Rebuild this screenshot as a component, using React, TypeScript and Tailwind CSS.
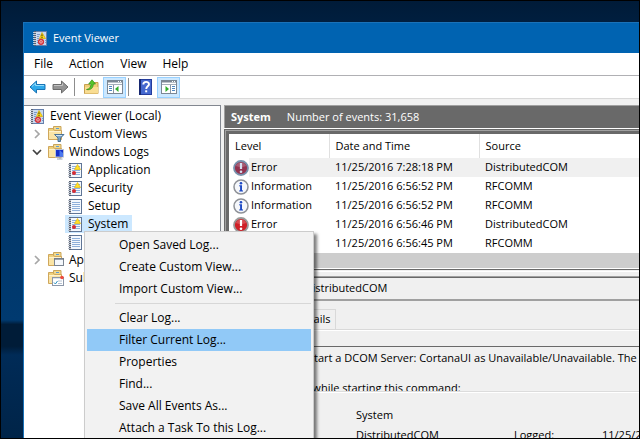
import clsx from 'clsx';
import type { ReactNode } from 'react';

type EventLevel = 'error' | 'information';

type EventRow = {
  level: EventLevel;
  date: string;
  source: string;
  selected?: boolean;
};

const menus = ['File', 'Action', 'View', 'Help'];

const events: EventRow[] = [
  { level: 'error', date: '11/25/2016 7:28:18 PM', source: 'DistributedCOM', selected: true },
  { level: 'information', date: '11/25/2016 6:56:52 PM', source: 'RFCOMM' },
  { level: 'information', date: '11/25/2016 6:56:52 PM', source: 'RFCOMM' },
  { level: 'error', date: '11/25/2016 6:56:46 PM', source: 'DistributedCOM' },
  { level: 'information', date: '11/25/2016 6:56:45 PM', source: 'RFCOMM' },
];

const contextMenu = [
  ['Open Saved Log...', 'Create Custom View...', 'Import Custom View...'],
  [
    'Clear Log...',
    'Filter Current Log...',
    'Properties',
    'Find...',
    'Save All Events As...',
    'Attach a Task To this Log...',
  ],
];

function ViewerIcon() {
  return (
    <svg viewBox="0 0 14 15" className="h-[15px] w-[14px] shrink-0">
      <rect x="2.5" y="0.5" width="11" height="14" fill="#c9d9f0" stroke="#6680ac" />
      <path d="M4 3.5h3M4 5.5h2M4 7.5h2M4 9.5h1M4 11.5h1M12 9.5h1M12 11.5h1" stroke="#7d9bc9" />
      <path d="M2 0v15" stroke="#596273" strokeWidth="2" />
      <path d="M0 1.5h3M0 3.5h3M0 5.5h3M0 7.5h3M0 9.5h3M0 11.5h3M0 13.5h3" stroke="#c6ccd6" />
      <path d="M9 1.5L12.5 7.5h-6z" fill="#ffe11c" stroke="#d3a600" strokeWidth="0.7" />
      <path d="M9 3.4v2M9 6v1" stroke="#3d3200" />
      <circle cx="8" cy="10.8" r="2.4" fill="#fbe3e3" stroke="#d3323a" strokeWidth="1.5" />
      <path d="M7 9.8l2 2M9 9.8l-2 2" stroke="#d3323a" strokeWidth="0.8" />
    </svg>
  );
}

function LogIcon({ plain }: { plain?: boolean }) {
  return (
    <svg viewBox="0 0 14 15" className="h-[15px] w-[14px] shrink-0">
      <rect x="2.5" y="0.5" width="11" height="14" fill="#f4f8fd" stroke="#5f7596" />
      <path d="M4 3.5h8M4 5.5h8M4 7.5h8M4 9.5h8M4 11.5h8" stroke="#8fb0da" />
      <path d="M2 0v15" stroke="#596273" strokeWidth="2" />
      <path d="M0 1.5h3M0 3.5h3M0 5.5h3M0 7.5h3M0 9.5h3M0 11.5h3M0 13.5h3" stroke="#b9c0cb" />
      {!plain && (
        <>
          <path d="M9.5 1.5L12.5 6.5h-6z" fill="#ffe02a" stroke="#e2b80a" strokeWidth="0.7" />
          <circle cx="6" cy="10" r="2" fill="#d62c34" />
        </>
      )}
    </svg>
  );
}

function FolderIcon({ children }: { children?: ReactNode }) {
  return (
    <svg viewBox="0 0 17 16" className="h-4 w-[17px] shrink-0">
      <path d="M5.5 0.5h7.500v5h-7.500z" fill="#f3d98b" stroke="#c9a45a" />
      <path d="M8 2.500h3" stroke="#5b9bd5" />
      <path d="M0.5 2.500h4.500l1.500 2h7v9h-13z" fill="#eed07d" stroke="#cfa75c" />
      <path d="M1 6h12v7H1z" fill="#fae4a6" />
      <path d="M1 5.500h12" stroke="#fff3cf" />
      {children}
    </svg>
  );
}

function CustomViewsIcon() {
  return (
    <FolderIcon>
      <path d="M6.5 8.500h9.500l-3.500 3.500v3.500h-2.500v-3.500z" fill="#7ba3c5" stroke="#4d7496" />
      <path d="M8 9.500h6" stroke="#cfe2f2" />
    </FolderIcon>
  );
}

function WindowsLogsIcon() {
  return (
    <FolderIcon>
      <rect x="7.5" y="5.500" width="8" height="7.500" fill="#1730c8" stroke="#b9c3d6" />
      <path d="M11.500 6v6.500h3.500V9z" fill="#4a78f0" />
      <path d="M9 15h5.500M11 14h2" stroke="#9aa3b2" />
    </FolderIcon>
  );
}

function ApplicationsIcon() {
  return (
    <FolderIcon>
      <rect x="6.5" y="6.5" width="9" height="7" fill="#f5f8fc" stroke="#7c8592" />
      <path d="M6 7h10" stroke="#717b89" strokeWidth="1.4" />
    </FolderIcon>
  );
}

function SubscriptionsIcon() {
  return (
    <FolderIcon>
      <rect x="4.5" y="7.5" width="11" height="8" fill="#fff" stroke="#8c97a8" />
      <path d="M5 8.5h8" stroke="#dde3ec" />
      <circle cx="14" cy="7.5" r="1.8" fill="#f04a3c" />
      <path d="M6 12.5l1.4 1.5L9.5 11" fill="none" stroke="#2a8fbd" />
      <path d="M10.5 11h1M12.5 11h1M10.5 13.5h1M12.5 13.5h1" stroke="#6b84a4" />
    </FolderIcon>
  );
}

function Chevron({ open }: { open?: boolean }) {
  return (
    <svg viewBox="0 0 10 10" className="h-2.5 w-2.5 shrink-0" fill="none" strokeWidth="1.7">
      {open ? (
        <path d="M1 3l4 4 4-4" stroke="#404040" />
      ) : (
        <path d="M3 1l4 4-4 4" stroke="#a6a6a6" />
      )}
    </svg>
  );
}

function LevelIcon({ level, selected }: { level: EventLevel; selected?: boolean }) {
  if (level === 'error') {
    return (
      <svg viewBox="0 0 16 16" className="h-4 w-4 shrink-0">
        <circle
          cx="8"
          cy="8"
          r="7"
          fill={selected ? '#93324f' : '#cf2027'}
          stroke={selected ? '#7891ac' : '#9a9a9a'}
          strokeWidth="1.8"
        />
        <path d="M2.8 6a5.6 5.6 0 0 1 10.4 0c-3 1.5-7 1.5-10.4 0z" fill="#fff" opacity="0.2" />
        <path d="M8 3v6" stroke={selected ? '#d5dff0' : '#fff'} strokeWidth="2.2" />
        <circle cx="8" cy="11.7" r="1.3" fill={selected ? '#d5dff0' : '#fff'} />
      </svg>
    );
  }
  return (
    <svg viewBox="0 0 16 16" className="h-4 w-4 shrink-0">
      <circle cx="8" cy="8" r="7" fill="#f5f7fb" stroke="#8e9197" strokeWidth="1.5" />
      <circle cx="8" cy="4.2" r="1.3" fill="#1d49c4" />
      <path d="M6.2 6.3H9v5l1 .3v.9H6.2v-.9l.9-.3V7.500l-.9-.3z" fill="#1d49c4" />
    </svg>
  );
}

function ArrowIcon({ forward }: { forward?: boolean }) {
  return (
    <svg viewBox="0 0 17 14" className="h-3.5 w-[17px]">
      {forward ? (
        <>
          <path d="M16 7L9.5 1v3.500H1v5h8.500V13z" fill="#949494" stroke="#6c6c6c" />
          <path d="M2 5.500h8.500V3.300" fill="none" stroke="#c4c4c4" />
        </>
      ) : (
        <>
          <path d="M1 7l6.500-6v3.500H16v5H7.500V13z" fill="#2fa9ea" stroke="#1973b4" />
          <path d="M3 6.500L6.500 3.300v2.200H15" fill="none" stroke="#93dcfb" />
        </>
      )}
    </svg>
  );
}

function UpFolderIcon() {
  return (
    <svg viewBox="0 0 15 16" className="h-4 w-[15px]">
      <path d="M0.5 5.500h5l1 1.500h1.500V3.500h6v11H.5z" fill="#f0cf78" stroke="#c79f4e" />
      <path d="M1 8h13v6.500H1z" fill="#f9dd92" />
      <path
        d="M2.500 10.500C5.500 10 7 8 7 5H4.700L8 0.800 11.500 5H9.300c0 3.800-2.500 6.500-6.800 5.500z"
        fill="#58c52b"
        stroke="#2f8f17"
        strokeWidth="0.7"
      />
    </svg>
  );
}

function HelpIcon() {
  return (
    <svg viewBox="0 0 13 16" className="h-4 w-[13px]">
      <rect width="13" height="16" fill="#243c9c" />
      <rect x="2" y="1" width="10" height="14" fill="#4468cf" />
      <path d="M1 0v16" stroke="#142467" strokeWidth="1.6" />
      <path
        d="M4.300 5.500C4.300 2 10 2 10 5.200c0 2-2.800 2.300-2.800 4.800"
        fill="none"
        stroke="#fff"
        strokeWidth="1.9"
      />
      <rect x="6.200" y="11.300" width="2" height="2" fill="#fff" />
    </svg>
  );
}

// Small window outline used by the two pane toggles
function PaneIcon({ side }: { side: 'left' | 'right' }) {
  return (
    <svg viewBox="0 0 16 14" className="h-3.5 w-4">
      <rect x="0.5" y="0.5" width="15" height="13" fill="#fff" stroke="#7b8794" />
      <path d="M0 1.500h16" stroke="#7b8794" strokeWidth="2" />
      <path d="M11 1.500h1M13 1.500h1" stroke="#fff" />
      <path d="M1 4.500h14" stroke="#a5afba" />
      {side === 'left' ? (
        <>
          <path d="M6.500 5v8" stroke="#8a95a2" />
          <path d="M2 6.500h3M2 8.500h3M2 10.500h3" stroke="#4d86c0" />
          <path d="M11.500 6v6L8 9z" fill="#2fae2a" />
        </>
      ) : (
        <>
          <path d="M9.500 5v8" stroke="#8a95a2" />
          <path d="M11 6.500h3M11 8.500h3M11 10.500h3" stroke="#4d86c0" />
          <path d="M4.500 6v6L8 9z" fill="#2fae2a" />
        </>
      )}
    </svg>
  );
}

function ToolButton({
  label,
  active,
  className,
  children,
}: {
  label: string;
  active?: boolean;
  className?: string;
  children: ReactNode;
}) {
  return (
    <button
      type="button"
      aria-label={label}
      className={clsx(
        'flex h-[21px] w-[23px] items-center justify-center',
        active && 'border border-[#99d1ff] bg-[#cce8ff]',
        className,
      )}
    >
      {children}
    </button>
  );
}

function TreeFolder({
  label,
  icon,
  open,
  leaf,
}: {
  label: string;
  icon: ReactNode;
  open?: boolean;
  leaf?: boolean;
}) {
  return (
    <button type="button" className="flex h-[18px] items-center pl-2">
      <span className="flex w-4 shrink-0">{!leaf && <Chevron open={open} />}</span>
      {icon}
      <span className="pl-1">{label}</span>
    </button>
  );
}

function TreeLog({ label, plain, selected }: { label: string; plain?: boolean; selected?: boolean }) {
  return (
    <button
      type="button"
      className={clsx(
        'ml-[41px] flex h-[18px] items-center gap-1.5 pr-1 pl-[3px]',
        selected && 'bg-[#cce8ff]',
      )}
    >
      <LogIcon plain={plain} />
      {label}
    </button>
  );
}

function ConsoleTree() {
  return (
    <nav className="flex w-[197px] shrink-0 flex-col items-start overflow-hidden border-t border-r border-[#828790] bg-white pt-px">
      <button type="button" className="flex h-[18px] items-center gap-1.5 pl-1.5">
        <ViewerIcon />
        Event Viewer (Local)
      </button>
      <TreeFolder label="Custom Views" icon={<CustomViewsIcon />} />
      <TreeFolder label="Windows Logs" icon={<WindowsLogsIcon />} open />
      <TreeLog label="Application" />
      <TreeLog label="Security" />
      <TreeLog label="Setup" plain />
      <TreeLog label="System" selected />
      <TreeLog label="Forwarded Events" plain />
      <TreeFolder label="Applications and Services" icon={<ApplicationsIcon />} />
      <TreeFolder label="Subscriptions" icon={<SubscriptionsIcon />} leaf />
    </nav>
  );
}

function EventTable() {
  return (
    <table className="w-full table-fixed border-collapse bg-white text-left">
      <thead>
        <tr className="h-6">
          <th className="w-[100px] border-r border-[#e0e0e0] p-0 pl-1.5 font-normal">Level</th>
          <th className="w-[150px] border-r border-[#e0e0e0] p-0 pl-1.5 font-normal">Date and Time</th>
          <th className="p-0 pl-1.5 font-normal">Source</th>
        </tr>
      </thead>
      <tbody>
        {events.map((event, index) => (
          <tr key={index} className="h-[19px]">
            <td className="p-0 pl-1">
              <div className="flex h-[19px] items-center">
                <LevelIcon level={event.level} selected={event.selected} />
                <span
                  className={clsx(
                    'flex h-full flex-1 items-center pl-0.5',
                    event.selected && 'bg-[#f0f0f0]',
                  )}
                >
                  {event.level === 'error' ? 'Error' : 'Information'}
                </span>
              </div>
            </td>
            <td className={clsx('p-0 pl-1.5', event.selected && 'bg-[#f0f0f0]')}>{event.date}</td>
            <td className={clsx('p-0 pl-1.5', event.selected && 'bg-[#f0f0f0]')}>{event.source}</td>
          </tr>
        ))}
      </tbody>
    </table>
  );
}

function EventDetails() {
  return (
    <section className="flex flex-1 flex-col border-t border-[#a0a0a0]">
      <h2 className="flex h-6 shrink-0 items-center border-t border-b-2 border-t-[#696969] border-b-[#a0a0a0] pl-3">
        Event 10001, DistributedCOM
      </h2>
      <div className="mt-2 flex h-5 shrink-0 pl-2">
        <button type="button" className="w-[54px] border-t border-l border-[#d9d9d9]">
          General
        </button>
        <button type="button" className="w-[50px] border border-b-0 border-[#d9d9d9] pl-1">
          Details
        </button>
      </div>
      <div className="h-[17px] shrink-0 border-t border-[#d9d9d9]">
        <div className="border-t border-white" />
      </div>
      <div className="h-[46px] shrink-0 overflow-hidden border-t border-b border-t-[#696969] border-b-[#dcdcdc] pt-[3px] pl-8 leading-[15px] whitespace-nowrap">
        <p>Unable to start a DCOM Server: CortanaUI as Unavailable/Unavailable. The error:</p>
        <p className="pt-[15px]">Happened while starting this command:</p>
      </div>
      <dl className="grid grid-cols-[132px_158px_88px_auto] border-t border-white pt-3 leading-5 whitespace-nowrap">
        <dt className="pl-4">Log Name:</dt>
        <dd className="col-span-3">System</dd>
        <dt className="pl-4">Source:</dt>
        <dd>DistributedCOM</dd>
        <dt>Logged:</dt>
        <dd>11/25/2016 7:28:18 PM</dd>
      </dl>
    </section>
  );
}

function ContextMenu() {
  return (
    <div
      role="menu"
      className="absolute top-[230px] left-[83px] w-[230px] border border-[#cccccc] bg-[#f2f2f2] p-0.5 shadow-[3px_3px_3px_rgba(0,0,0,0.5)]"
    >
      {contextMenu.map((group, index) => (
        <div key={index}>
          {index > 0 && <hr className="my-[3px] ml-7 border-[#d7d7d7]" />}
          {group.map((item) => (
            <button
              key={item}
              type="button"
              role="menuitem"
              className={clsx(
                'flex h-[22px] w-full items-center pl-8',
                item === 'Filter Current Log...' && 'bg-[#91c9f7]',
              )}
            >
              {item}
            </button>
          ))}
        </div>
      ))}
    </div>
  );
}

export default function App() {
  return (
    <div className="relative flex h-screen overflow-hidden border border-black bg-[linear-gradient(180deg,#001b38_0%,#002a54_20%,#003567_45%,#003a70_73%,#001c38_74%,#001c38_79%,#002b57_81%,#002448_100%)] pt-[21px] pl-[22px] font-['Open_Sans','Noto_Sans',sans-serif] text-xs text-black">
      <div className="flex min-w-0 flex-1 flex-col border-t border-l border-[#1a72b8] bg-[#f0f0f0]">
        <header className="flex h-[30px] shrink-0 items-center gap-1.5 bg-[#0063b1] pl-[9px] text-[11px] text-white">
          <ViewerIcon />
          <h1>Event Viewer</h1>
        </header>
        <div className="flex h-[23px] shrink-0 border-b border-[#b0b0b4] bg-white pl-0.5">
          {menus.map((menu) => (
            <button key={menu} type="button" className="px-2">
              {menu}
            </button>
          ))}
        </div>
        <div className="flex h-[23px] shrink-0 items-center border-b border-[#d9d9d9] bg-white pl-0.5">
          <ToolButton label="Back">
            <ArrowIcon />
          </ToolButton>
          <ToolButton label="Forward">
            <ArrowIcon forward />
          </ToolButton>
          <span className="mx-0.5 h-[18px] w-px bg-[#8d8d8d]" />
          <ToolButton label="Up one level" className="ml-[3px]">
            <UpFolderIcon />
          </ToolButton>
          <ToolButton label="Show or hide console tree" active>
            <PaneIcon side="left" />
          </ToolButton>
          <span className="mx-0.5 h-[18px] w-px bg-[#8d8d8d]" />
          <ToolButton label="Help" className="ml-[3px]">
            <HelpIcon />
          </ToolButton>
          <ToolButton label="Show or hide action pane" active>
            <PaneIcon side="right" />
          </ToolButton>
        </div>

        <div className="flex min-h-0 flex-1 gap-[3px] pt-1.5">
          <ConsoleTree />
          <main className="flex min-w-0 flex-1 flex-col overflow-hidden text-[11px]">
            <div className="flex h-[23px] shrink-0 items-center gap-4 border-t border-l border-[#a0a0a0] bg-[#696969] pl-1.5 text-white">
              <strong>System</strong>
              <span>Number of events: 31,658</span>
            </div>
            <div className="shrink-0 border-t border-white">
              <div className="border-t border-l border-[#696969]">
                <div className="border-t border-l border-[#a0a0a0]">
                  <div className="border-t-3 border-l-3 border-[#696969]">
                    <EventTable />
                    <div className="h-4 border-b border-white bg-[#cdcdcd]" />
                  </div>
                </div>
              </div>
              <div className="h-[3px] border-t border-b border-t-[#696969] border-b-white" />
            </div>
            <div className="h-1 shrink-0" />
            <EventDetails />
          </main>
        </div>
      </div>
      <ContextMenu />
    </div>
  );
}
